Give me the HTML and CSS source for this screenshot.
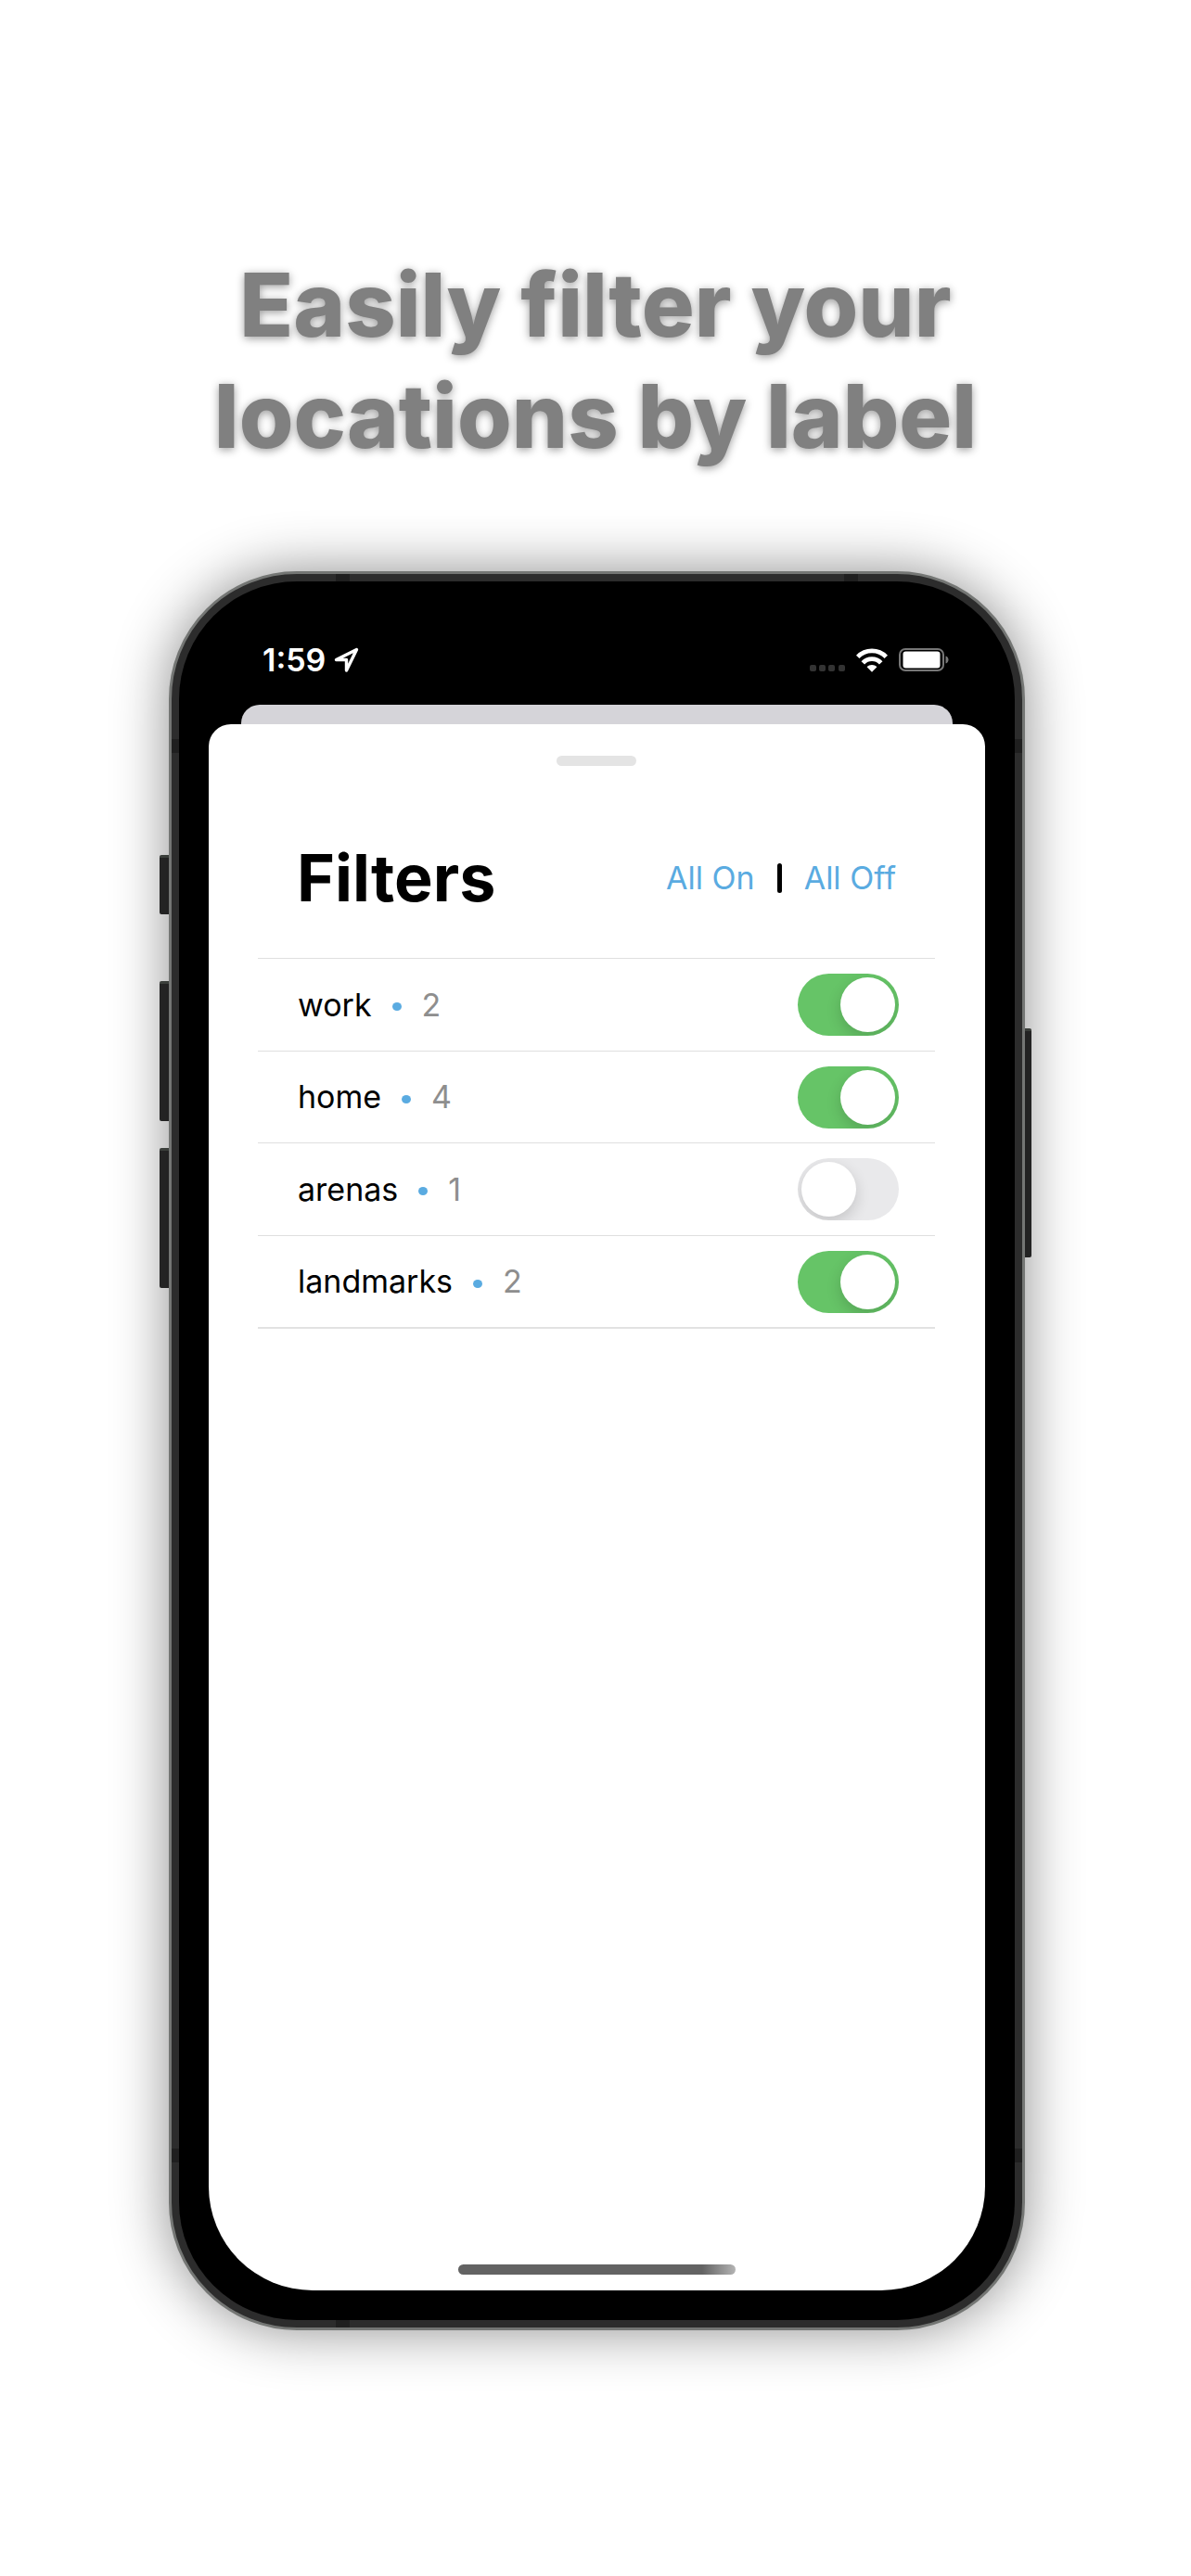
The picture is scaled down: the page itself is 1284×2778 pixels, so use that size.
FILE: index.html
```html
<!DOCTYPE html>
<html lang="en">
<head>
<meta charset="utf-8">
<meta name="viewport" content="width=device-width, initial-scale=1">
<title>Filters</title>
<link rel="stylesheet" href="styles.css">
</head>
<body>
<main class="page">
  <h1 class="headline">Easily filter your<br>locations by label</h1>

  <div class="device">
    <span class="key key-mute"></span>
    <span class="key key-up"></span>
    <span class="key key-down"></span>
    <span class="key key-power"></span>

    <div class="frame">
      <span class="band band-top band-left"></span>
      <span class="band band-top band-right"></span>
      <span class="band band-bottom band-left"></span>
      <span class="band side-left side-upper"></span>
      <span class="band side-right side-upper"></span>
      <span class="band side-left side-lower"></span>
      <span class="band side-right side-lower"></span>

      <div class="bezel">
        <header class="status">
          <div class="status-time">
            <time>1:59</time>
            <svg width="27" height="28" viewBox="0 0 27 28" aria-hidden="true"><path d="M24.500 2.500 L2.500 13.500 H13.500 V25 Z" fill="none" stroke="#fff" stroke-width="3.400" stroke-linejoin="round"/></svg>
          </div>
          <div class="status-icons">
            <svg class="signal" width="38" height="8" viewBox="0 0 38 8" fill="#333" aria-hidden="true"><rect x="0" y="0" width="7" height="7" rx="2"/><rect x="10" y="0" width="7" height="7" rx="2"/><rect x="20" y="0" width="7" height="7" rx="2"/><rect x="31" y="0" width="7" height="7" rx="2"/></svg>
            <svg width="34" height="26" viewBox="0 0 34 26" aria-hidden="true"><g fill="none" stroke="#fff" stroke-width="4.800"><path d="M1.700 9.400 C10 0.800 24 0.800 32.300 9.400"/><path d="M7.300 15.800 C12.500 10.100 21.500 10.100 26.700 15.800"/></g><path d="M11.600 20.300 C14.500 17.300 19.500 17.300 22.400 20.300 L17 25.700 Z" fill="#fff"/></svg>
            <svg width="54" height="26" viewBox="0 0 54 26" aria-hidden="true"><rect x="1" y="1" width="47" height="23" rx="6" fill="none" stroke="#777" stroke-width="2"/><rect x="4.500" y="3.500" width="40" height="18" rx="3" fill="#fff"/><path d="M50.500 8.500 C54.500 9.500 54.500 15.500 50.500 16.500 Z" fill="#777"/></svg>
          </div>
        </header>

        <div class="sheet-behind"></div>
        <section class="sheet" aria-labelledby="title">
          <div class="grabber"></div>
          <div class="sheet-head">
            <h2 class="title" id="title">Filters</h2>
            <div class="actions">
              <button class="action" type="button">All On</button>
              <span class="divider"></span>
              <button class="action" type="button">All Off</button>
            </div>
          </div>
          <ul class="filters">
            <li class="filter"><label class="name" for="work">work <span class="dot"></span><span class="count">2</span></label><input class="switch" type="checkbox" role="switch" id="work" checked></li>
            <li class="filter"><label class="name" for="home">home <span class="dot"></span><span class="count">4</span></label><input class="switch" type="checkbox" role="switch" id="home" checked></li>
            <li class="filter"><label class="name" for="arenas">arenas <span class="dot"></span><span class="count">1</span></label><input class="switch" type="checkbox" role="switch" id="arenas"></li>
            <li class="filter"><label class="name" for="landmarks">landmarks <span class="dot"></span><span class="count">2</span></label><input class="switch" type="checkbox" role="switch" id="landmarks" checked></li>
          </ul>
          <div class="home-bar"></div>
        </section>
      </div>
    </div>
  </div>
</main>
</body>
</html>
```

FILE: styles.css
```css
* {
  box-sizing: border-box;
}

body {
  margin: 0;
  background: #fff;
  color: #000;
  font-family: Inter, "Liberation Sans", sans-serif;
}

.page {
  display: flex;
  flex-direction: column;
  align-items: center;
  gap: 107px;
  padding: 269px 24px 264px;
}

.headline {
  margin: 0;
  color: #808080;
  font-size: 95px;
  font-weight: 800;
  line-height: 120px;
  text-align: center;
  text-shadow: 0 2px 10px rgba(0, 0, 0, 0.4);
}

/* Phone body */
.device {
  position: relative;
  width: 100%;
  max-width: 940px;
  padding: 0 7px 0 10px;
}

.frame {
  position: relative;
  padding: 8px;
  border: 3px solid #747674;
  border-radius: 138px;
  background: #2c2c2c;
  box-shadow: 0 0 60px rgba(0, 0, 0, 0.45);
}

.bezel {
  padding: 32px;
  border-radius: 127px;
  background: #000;
}

.key {
  position: absolute;
  left: 0;
  width: 10px;
  border-top: 3px solid #4a4f4a;
  border-radius: 2px 0 0 2px;
  background: #2c2c2c;
}

.key-mute {
  top: 306px;
  height: 64px;
}

.key-up {
  top: 442px;
  height: 151px;
}

.key-down {
  top: 622px;
  height: 151px;
}

.key-power {
  top: 493px;
  right: 0;
  left: auto;
  width: 7px;
  height: 247px;
  border-radius: 0 2px 2px 0;
}

/* Antenna bands on the frame */
.band {
  position: absolute;
  width: 15px;
  height: 8px;
  background: #1f1f1f;
}

.band-top {
  top: 0;
}

.band-bottom {
  bottom: 0;
}

.band-left {
  left: 177px;
}

.band-right {
  right: 177px;
}

.side-left,
.side-right {
  width: 8px;
  height: 15px;
}

.side-left {
  left: 0;
}

.side-right {
  right: 0;
}

.side-upper {
  top: 178px;
}

.side-lower {
  bottom: 178px;
}

/* Status bar */
.status {
  display: flex;
  align-items: center;
  justify-content: space-between;
  height: 101px;
  padding: 5px 39px 0 58px;
  color: #fff;
}

.status-time {
  display: flex;
  align-items: center;
  gap: 9px;
  font-size: 34px;
  font-weight: 600;
  line-height: 40px;
}

.status-icons {
  display: flex;
  align-items: center;
  gap: 12px;
}

.signal {
  align-self: flex-end;
}

/* Sheets */
.sheet-behind {
  height: 21px;
  margin: 0 35px;
  border-radius: 20px 20px 0 0;
  background: #d5d4d9;
}

.sheet {
  display: flex;
  flex-direction: column;
  min-height: 1689px;
  padding: 34px 54px 17px 53px;
  border-radius: 24px 24px 112px 112px;
  background: #fff;
}

.grabber {
  align-self: center;
  width: 86px;
  height: 11px;
  border-radius: 6px;
  background: #e4e4e4;
}

.sheet-head {
  display: flex;
  align-items: center;
  justify-content: space-between;
  margin: 77px 42px 42px;
}

.title {
  margin: 0;
  font-size: 70px;
  font-weight: 700;
  line-height: 88px;
}

.actions {
  display: flex;
  align-items: center;
  gap: 24px;
}

.action {
  padding: 0;
  border: 0;
  background: none;
  color: #5aabe1;
  font: 34px/44px Inter, "Liberation Sans", sans-serif;
  cursor: pointer;
}

.divider {
  width: 5px;
  height: 32px;
  border-radius: 3px;
  background: #000;
}

.filters {
  display: grid;
  grid-auto-rows: 1fr;
  min-height: 400px;
  margin: 0;
  padding: 0;
  border-bottom: 2px solid #e2e2e2;
  list-style: none;
}

.filter {
  display: flex;
  align-items: center;
  justify-content: space-between;
  padding: 1px 39px 0 43px;
  border-top: 1px solid #dfdfdf;
}

.name {
  display: flex;
  align-items: center;
  gap: 22px;
  font-size: 34px;
  line-height: 44px;
}

.dot {
  width: 10px;
  height: 9px;
  margin-top: 4px;
  border-radius: 50%;
  background: #5aabe1;
}

.count {
  color: #8e8e8e;
}

.switch {
  display: flex;
  appearance: none;
  width: 109px;
  height: 67px;
  margin: 0;
  padding: 4px;
  border-radius: 34px;
  background: #e9e9eb;
  overflow: hidden;
  cursor: pointer;
}

.switch::before {
  content: "";
  width: 59px;
  height: 59px;
  border-radius: 50%;
  background: #fff;
  box-shadow: 0 6px 16px rgba(0, 0, 0, 0.16);
}

.switch:checked {
  justify-content: flex-end;
  background: #66c467;
}

.home-bar {
  align-self: center;
  width: 299px;
  height: 11px;
  margin-top: auto;
  border-radius: 6px;
  background: linear-gradient(90deg, #636363 88%, #b4b4b4);
}
```
